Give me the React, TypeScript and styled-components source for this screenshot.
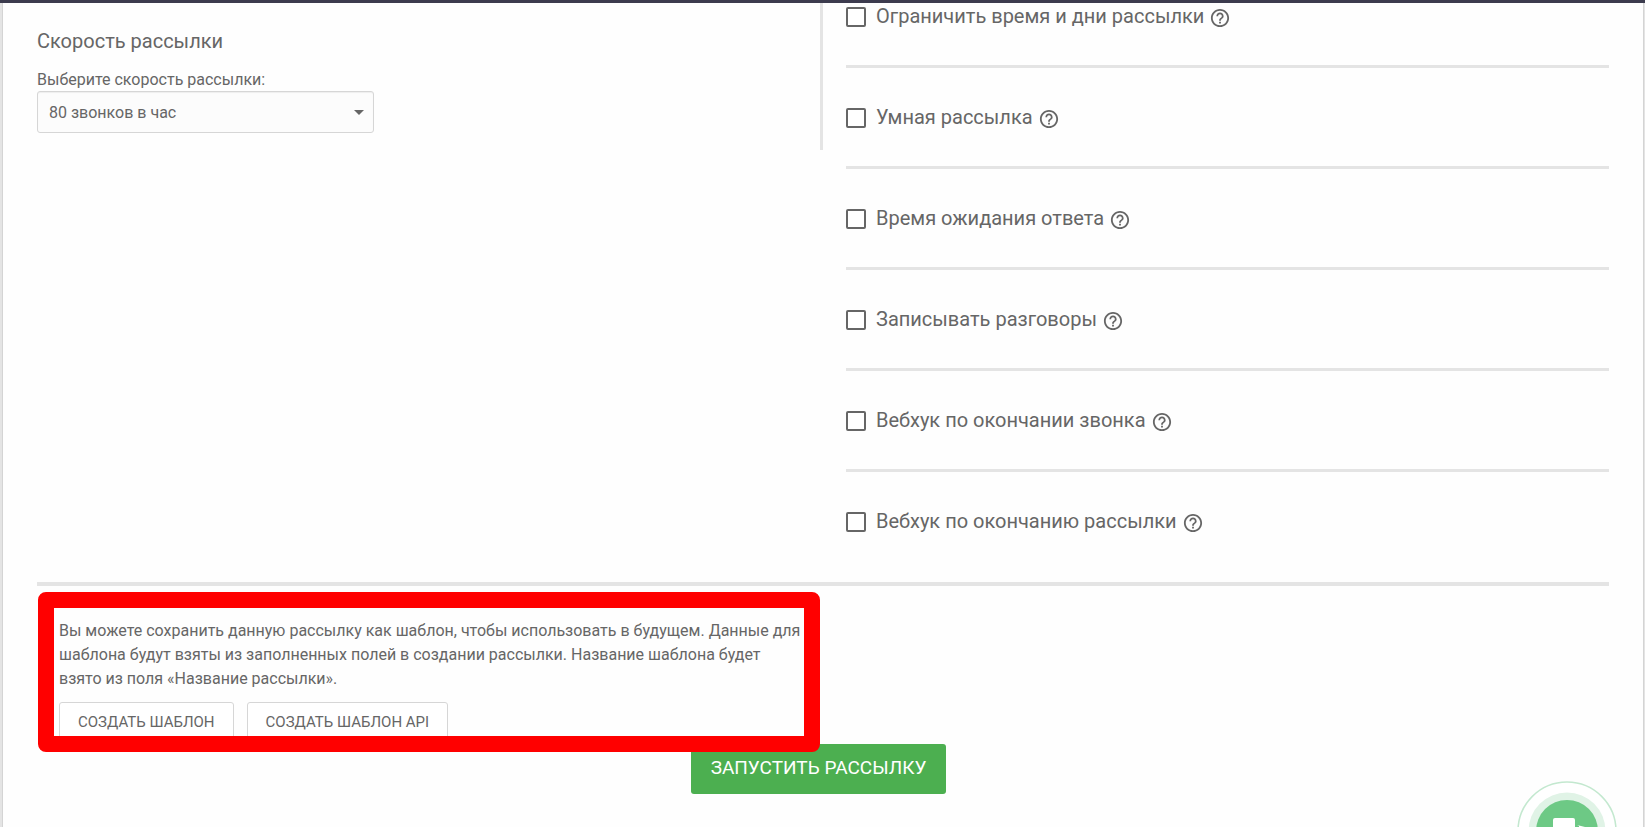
import React, { useState } from 'react';
import styled, { createGlobalStyle } from 'styled-components';

const ink = '#666666';
const rule = '#e4e4e4';

const GlobalStyle = createGlobalStyle`
  *, *::before, *::after { box-sizing: border-box; }
  body {
    margin: 0;
    background: #e4e4e4;
    color: ${ink};
    font-family: Roboto, "Liberation Sans", sans-serif;
    font-size: 16px;
    line-height: 24px;
  }
  button, select, input { font: inherit; color: inherit; }
`;

const Page = styled.div`
  min-height: 100vh;
  display: flex;
  flex-direction: column;
  border-top: 3px solid #3c3b4e;
`;

const Card = styled.main`
  flex: 1;
  margin: 0 1px 0 2px;
  padding: 0 34px;
  background: #fefefe;
  border-left: 1px solid #d4d4d4;
  border-right: 1px solid #d4d4d4;
`;

const Columns = styled.div`
  display: grid;
  grid-template-columns: 1fr 1fr;
  align-items: start;
`;

const SpeedPanel = styled.section`
  height: 147px;
  padding-top: 24px;
  border-right: 3px solid ${rule};
`;

const Title = styled.h2`
  margin: 0 0 14px;
  font-size: 20px;
  line-height: 28px;
  font-weight: 400;
`;

const FieldLabel = styled.label`
  display: block;
  line-height: 22px;
`;

const SelectBox = styled.div`
  position: relative;
  width: 337px;
  max-width: 100%;
`;

const Select = styled.select`
  display: block;
  width: 100%;
  height: 42px;
  padding: 2px 32px 0 11px;
  appearance: none;
  border: 1px solid #d6d6d6;
  border-radius: 3px;
  background: #fcfcfc;
  box-shadow: inset 0 1px 1px rgba(0, 0, 0, 0.06);
`;

const Caret = styled.svg`
  position: absolute;
  top: 19px;
  right: 10px;
  pointer-events: none;
`;

const OptionList = styled.ul`
  margin: 0;
  padding: 0 0 0 23px;
  list-style: none;
`;

const OptionRow = styled.li`
  display: flex;
  align-items: flex-start;
  height: 101px;

  & + & {
    padding-top: 36px;
    border-top: 3px solid ${rule};
  }
  &:first-child { height: 62px; }
  &:last-child { height: 113px; }
`;

const OptionLabel = styled.label`
  display: flex;
  align-items: flex-start;
  gap: 10px;
  font-size: 20px;
  line-height: 26px;
`;

const Checkbox = styled.input`
  width: 20px;
  height: 20px;
  margin: 4px 0 0;
  appearance: none;
  border: 2px solid ${ink};
  border-radius: 2px;
  background: #fff;

  &:checked { background: ${ink}; }
`;

const HelpButton = styled.button`
  display: flex;
  margin: 5px 0 0 6px;
  padding: 0;
  border: 0;
  background: none;
`;

const TemplatePanel = styled.section`
  position: relative;
  width: 50%;
  padding: 33px 22px 0;
`;

const Divider = styled.hr`
  height: 4px;
  margin: 0;
  border: 0;
  background: ${rule};
`;

const Note = styled.p`
  margin: 0;
`;

const ButtonRow = styled.div`
  display: flex;
  gap: 13px;
  margin-top: 11px;
`;

const OutlineButton = styled.button`
  height: 42px;
  padding: 0 18px 2px;
  border: 1px solid #d6d6d6;
  border-radius: 3px;
  background: #fff;
  font-size: 15px;
  text-transform: uppercase;
`;

const Highlight = styled.div`
  position: absolute;
  top: 6px;
  left: 1px;
  right: 3px;
  height: 160px;
  border: 16px solid #ff0000;
  border-radius: 8px;
  pointer-events: none;
`;

const LaunchRow = styled.div`
  display: flex;
  justify-content: center;
  padding: 0 9px 32px 0;
`;

const LaunchButton = styled.button`
  height: 50px;
  padding: 0 20px 2px;
  border: 0;
  border-radius: 3px;
  background: #4caf50;
  color: #fff;
  font-size: 19px;
  text-transform: uppercase;
`;

const ChatButton = styled.button`
  position: fixed;
  right: 28px;
  bottom: -54px;
  padding: 0;
  border: 0;
  background: none;

  svg { display: block; }
`;

const options = [
  'Ограничить время и дни рассылки',
  'Умная рассылка',
  'Время ожидания ответа',
  'Записывать разговоры',
  'Вебхук по окончании звонка',
  'Вебхук по окончанию рассылки',
];

function HelpIcon() {
  return (
    <svg width="20" height="20" viewBox="1 1 22 22" fill={ink} aria-hidden="true">
      <path d="M11 18h2v-2h-2v2zm1-16C6.480 2 2 6.480 2 12s4.480 10 10 10 10-4.480 10-10S17.520 2 12 2zm0 18c-4.410 0-8-3.590-8-8s3.590-8 8-8 8 3.590 8 8-3.590 8-8 8zm0-14c-2.210 0-4 1.790-4 4h2c0-1.100.9-2 2-2s2 .9 2 2c0 2-3 1.750-3 5h2c0-2.250 3-2.500 3-5 0-2.210-1.790-4-4-4z" />
    </svg>
  );
}

function Option({ text, id }: { text: string; id: string }) {
  const [on, setOn] = useState(false);
  return (
    <OptionRow>
      <OptionLabel htmlFor={id}>
        <Checkbox id={id} type="checkbox" checked={on} onChange={() => setOn(!on)} />
        {text}
      </OptionLabel>
      <HelpButton type="button" aria-label={`Подсказка: ${text}`}>
        <HelpIcon />
      </HelpButton>
    </OptionRow>
  );
}

export default function App() {
  return (
    <>
      <GlobalStyle />
      <Page>
        <Card>
          <Columns>
            <SpeedPanel>
              <Title>Скорость рассылки</Title>
              <FieldLabel htmlFor="speed">Выберите скорость рассылки:</FieldLabel>
              <SelectBox>
                <Select id="speed" defaultValue="80">
                  <option value="80">80 звонков в час</option>
                </Select>
                <Caret width="10" height="5" viewBox="0 0 10 5" aria-hidden="true">
                  <path d="M0 0h10L5 5z" fill={ink} />
                </Caret>
              </SelectBox>
            </SpeedPanel>
            <OptionList>
              {options.map((text, i) => (
                <Option key={text} id={`option-${i}`} text={text} />
              ))}
            </OptionList>
          </Columns>
          <Divider />
          <TemplatePanel>
            <Note>
              Вы можете сохранить данную рассылку как шаблон, чтобы использовать в будущем. Данные для
              шаблона будут взяты из заполненных полей в создании рассылки. Название шаблона будет
              взято из поля «Название рассылки».
            </Note>
            <ButtonRow>
              <OutlineButton type="button">Создать шаблон</OutlineButton>
              <OutlineButton type="button">Создать шаблон API</OutlineButton>
            </ButtonRow>
            <Highlight />
          </TemplatePanel>
          <LaunchRow>
            <LaunchButton type="button">Запустить рассылку</LaunchButton>
          </LaunchRow>
        </Card>
      </Page>
      <ChatButton type="button" aria-label="Открыть чат">
        <svg width="100" height="100" viewBox="0 0 100 100" aria-hidden="true">
          <circle cx="50" cy="50" r="49" fill="#fff" stroke="#c3e8cf" strokeWidth="1.500" />
          <circle cx="50" cy="50" r="38.500" fill="#e0f3e6" />
          <circle cx="50" cy="50" r="31" fill="#6dc985" />
          <path d="M38 37h18a2 2 0 0 1 2 2v14H45l-9 8V39a2 2 0 0 1 2-2z" fill="#fff" />
          <path d="M60 44l2 1v12H50v4h12l6 5V46z" fill="#fff" />
        </svg>
      </ChatButton>
    </>
  );
}
